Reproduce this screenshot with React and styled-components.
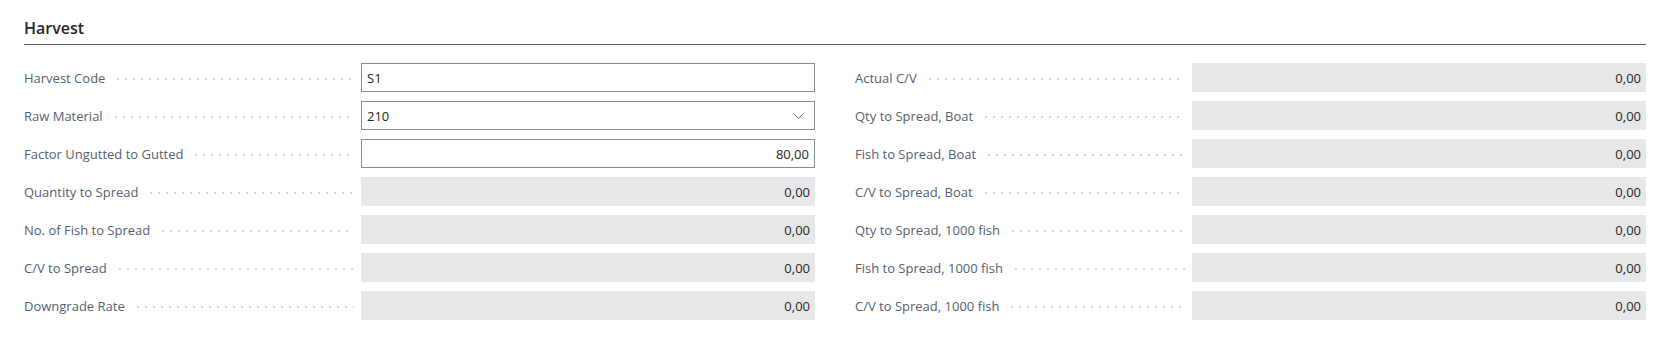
import React from 'react';
import styled, { createGlobalStyle } from 'styled-components';

const GlobalStyle = createGlobalStyle`
  body {
    margin: 0;
    background: #ffffff;
    font-family: "Segoe UI", "Open Sans", "Noto Sans", sans-serif;
  }
`;

const Page = styled.div`
  padding: 17px 15px 0 24px;
  height: 339px;
  box-sizing: border-box;
`;

const Header = styled.div`
  border-bottom: 1px solid #4f5d6b;
  padding-bottom: 5px;
  margin-bottom: 18px;
`;

const Title = styled.h2`
  margin: 0;
  font-size: 16px;
  line-height: 22px;
  font-weight: 600;
  color: #262626;
`;

const Columns = styled.div`
  display: grid;
  grid-template-columns: 1fr 1fr;
  column-gap: 40px;
`;

const Column = styled.div`
  display: flex;
  flex-direction: column;
  gap: 9px;
`;

const Row = styled.div`
  display: grid;
  grid-template-columns: 337px 1fr;
  height: 29px;
  align-items: center;
`;

const Label = styled.div`
  display: flex;
  align-items: center;
  font-size: 13px;
  color: #556170;
  white-space: nowrap;
  padding-right: 7px;
`;

const Leader = styled.span`
  flex: 1;
  height: 2px;
  margin: 2px 0 0 12px;
  background-image: linear-gradient(to right, #d3d5d9 2px, transparent 2px);
  background-size: 8px 2px;
  background-repeat: repeat-x;
`;

const Field = styled.div`
  box-sizing: border-box;
  height: 29px;
  display: flex;
  align-items: center;
  justify-content: ${(p) => (p.$align === 'right' ? 'flex-end' : 'space-between')};
  padding: 0 5px 0 5px;
  font-size: 13px;
  color: #262626;
  background: ${(p) => (p.$readOnly ? '#e6e7e8' : '#ffffff')};
  border: ${(p) => (p.$readOnly ? 'none' : '1px solid #8a8a8a')};
  padding-right: ${(p) => (p.$select ? '10px' : '5px')};
`;

const Chevron = () => (
  <svg width="11" height="6" viewBox="0 0 11 6" fill="none">
    <path d="M0.5 0.5 L5.5 5.5 L10.5 0.5" stroke="#6b6b6b" strokeWidth="1" />
  </svg>
);

const left = [
  { label: 'Harvest Code', value: 'S1', editable: true, align: 'left' },
  { label: 'Raw Material', value: '210', editable: true, select: true },
  { label: 'Factor Ungutted to Gutted', value: '80,00', editable: true, align: 'right' },
  { label: 'Quantity to Spread', value: '0,00' },
  { label: 'No. of Fish to Spread', value: '0,00' },
  { label: 'C/V to Spread', value: '0,00' },
  { label: 'Downgrade Rate', value: '0,00' },
];

const right = [
  { label: 'Actual C/V', value: '0,00' },
  { label: 'Qty to Spread, Boat', value: '0,00' },
  { label: 'Fish to Spread, Boat', value: '0,00' },
  { label: 'C/V to Spread, Boat', value: '0,00' },
  { label: 'Qty to Spread, 1000 fish', value: '0,00' },
  { label: 'Fish to Spread, 1000 fish', value: '0,00' },
  { label: 'C/V to Spread, 1000 fish', value: '0,00' },
];

const FieldRow = ({ field }) => (
  <Row>
    <Label>
      {field.label}
      <Leader />
    </Label>
    <Field
      $readOnly={!field.editable}
      $select={field.select}
      $align={field.align === 'left' || field.select ? 'left' : 'right'}
    >
      <span>{field.value}</span>
      {field.select && <Chevron />}
    </Field>
  </Row>
);

export default function App() {
  return (
    <>
      <GlobalStyle />
      <Page>
        <Header>
          <Title>Harvest</Title>
        </Header>
        <Columns>
          <Column>
            {left.map((f) => <FieldRow key={f.label} field={f} />)}
          </Column>
          <Column>
            {right.map((f) => <FieldRow key={f.label} field={f} />)}
          </Column>
        </Columns>
      </Page>
    </>
  );
}
